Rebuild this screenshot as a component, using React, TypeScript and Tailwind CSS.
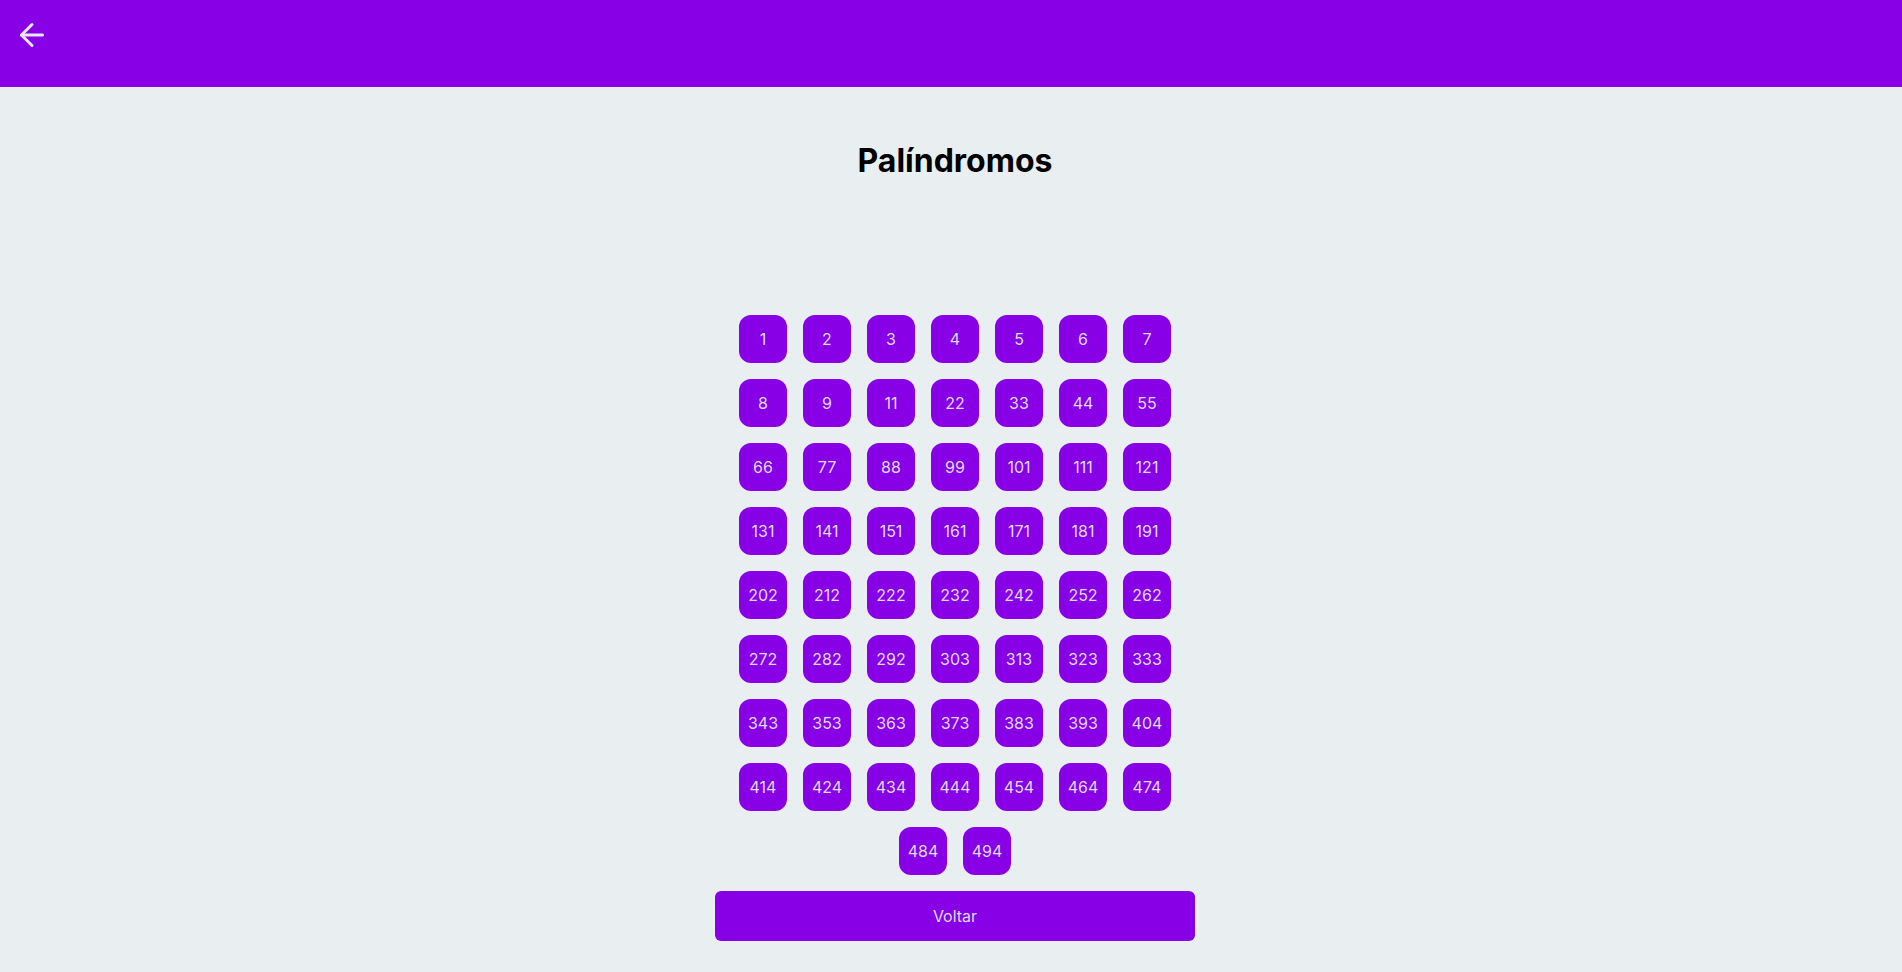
import React from "react";
import { ArrowLeft } from "lucide-react";

const palindromes = [
  1, 2, 3, 4, 5, 6, 7, 8, 9, 11, 22, 33, 44, 55, 66, 77, 88, 99, 101, 111, 121,
  131, 141, 151, 161, 171, 181, 191, 202, 212, 222, 232, 242, 252, 262, 272,
  282, 292, 303, 313, 323, 333, 343, 353, 363, 373, 383, 393, 404, 414, 424,
  434, 444, 454, 464, 474, 484, 494,
];

const App: React.FC = () => {
  return (
    <div
      className="min-h-screen bg-[#e9eff0]"
      style={{ fontFamily: "Inter, 'Noto Sans', sans-serif" }}
    >
      <header className="h-[87px] bg-[#8800e6] pl-[14px] pt-[17px]">
        <button className="block text-[#e6e6f0]">
          <ArrowLeft size={36} strokeWidth={2} />
        </button>
      </header>

      <main className="flex flex-col items-center pl-2">
        <h1 className="mt-[50px] text-[32px] font-bold leading-[48px] text-black">
          Palíndromos
        </h1>

        <div className="mt-[130px] flex w-[480px] flex-wrap justify-center gap-4">
          {palindromes.map((n) => (
            <button
              key={n}
              className="flex h-12 w-12 items-center justify-center rounded-xl bg-[#8800e6] text-base text-[#dcdcf2]"
            >
              {n}
            </button>
          ))}
        </div>

        <button className="mt-4 h-[50px] w-[480px] rounded-md bg-[#8800e6] text-base text-[#dcdcf2]">
          Voltar
        </button>
      </main>
    </div>
  );
};

export default App;
